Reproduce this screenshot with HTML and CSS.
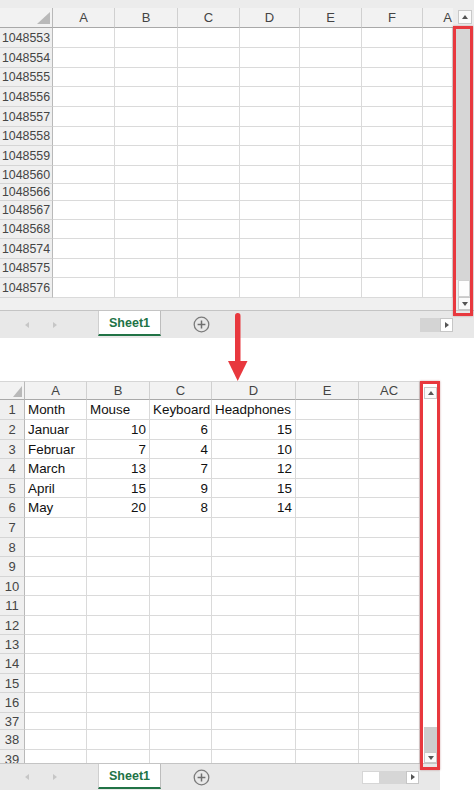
FILE: index.html
```html
<!DOCTYPE html>
<html>
<head>
<meta charset="utf-8">
<title>Excel scrollbar</title>
<link rel="stylesheet" href="styles.css">
</head>
<body>
<div class="page">

  <section class="xl xl-top">
    <div class="strip"></div>
    <div class="body">
      <div class="left">
        <div class="sheet s1">
          <div class="row hdr h20">
            <span class="corner"><svg width="13" height="12" viewBox="0 0 13 12"><polygon points="13,0 13,12 0,12" fill="#b9b9b9"/></svg></span>
            <span>A</span><span>B</span><span>C</span><span>D</span><span>E</span><span>F</span><span class="cut">A</span>
          </div>
          <div class="row h20"><span class="rh">1048553</span><span></span><span></span><span></span><span></span><span></span><span></span><span></span></div>
          <div class="row h20"><span class="rh">1048554</span><span></span><span></span><span></span><span></span><span></span><span></span><span></span></div>
          <div class="row h19"><span class="rh">1048555</span><span></span><span></span><span></span><span></span><span></span><span></span><span></span></div>
          <div class="row h20"><span class="rh">1048556</span><span></span><span></span><span></span><span></span><span></span><span></span><span></span></div>
          <div class="row h20"><span class="rh">1048557</span><span></span><span></span><span></span><span></span><span></span><span></span><span></span></div>
          <div class="row h19"><span class="rh">1048558</span><span></span><span></span><span></span><span></span><span></span><span></span><span></span></div>
          <div class="row h20"><span class="rh">1048559</span><span></span><span></span><span></span><span></span><span></span><span></span><span></span></div>
          <div class="row h18"><span class="rh">1048560</span><span></span><span></span><span></span><span></span><span></span><span></span><span></span></div>
          <div class="row h17"><span class="rh">1048566</span><span></span><span></span><span></span><span></span><span></span><span></span><span></span></div>
          <div class="row h19"><span class="rh">1048567</span><span></span><span></span><span></span><span></span><span></span><span></span><span></span></div>
          <div class="row h19"><span class="rh">1048568</span><span></span><span></span><span></span><span></span><span></span><span></span><span></span></div>
          <div class="row h20"><span class="rh">1048574</span><span></span><span></span><span></span><span></span><span></span><span></span><span></span></div>
          <div class="row h19"><span class="rh">1048575</span><span></span><span></span><span></span><span></span><span></span><span></span><span></span></div>
          <div class="row h20"><span class="rh">1048576</span><span></span><span></span><span></span><span></span><span></span><span></span><span></span></div>
        </div>
        <div class="band"></div>
      </div>
      <div class="vscroll v1">
        <div class="vtop"><div class="btn"><i class="tri-up"></i></div></div>
        <div class="track"></div>
        <div class="thumb"></div>
        <div class="btn down"><i class="tri-down"></i></div>
      </div>
    </div>
    <div class="tabbar">
      <div class="navs"><i class="tri-left"></i><i class="tri-right light"></i></div>
      <div class="tab">Sheet1</div>
      <div class="plus"><svg width="17" height="17" viewBox="0 0 17 17"><circle cx="8.5" cy="8.5" r="7.3" fill="none" stroke="#7b7b7b" stroke-width="1.3"/><path d="M8.5 4.6v7.8M4.6 8.5h7.8" stroke="#6f6f6f" stroke-width="1.5"/></svg></div>
      <div class="spacer"></div>
      <div class="hs-thumb gray"></div>
      <div class="hs-btn"><i class="tri-right dark"></i></div>
      <div class="hs-pad p21"></div>
    </div>
    <div class="redbox rb1"></div>
  </section>

  <svg class="arrow" width="24" height="70" viewBox="0 0 24 70">
    <rect x="9" y="1" width="5.5" height="50" rx="2.7" fill="#e8383e"/>
    <polygon points="2,49 21.5,49 11.7,69" fill="#e8383e"/>
  </svg>

  <section class="xl xl-bottom">
    <div class="body">
      <div class="sheet s2">
        <div class="row hdr h19">
          <span class="corner"><svg width="9" height="11" viewBox="0 0 9 11"><polygon points="9,0 9,11 0,11" fill="#b9b9b9"/></svg></span>
          <span>A</span><span>B</span><span>C</span><span>D</span><span>E</span><span>AC</span>
        </div>
        <div class="row h20"><span class="rh">1</span><span>Month</span><span>Mouse</span><span>Keyboard</span><span>Headphones</span><span></span><span></span></div>
        <div class="row h20"><span class="rh">2</span><span>Januar</span><span class="n">10</span><span class="n">6</span><span class="n">15</span><span></span><span></span></div>
        <div class="row h19"><span class="rh">3</span><span>Februar</span><span class="n">7</span><span class="n">4</span><span class="n">10</span><span></span><span></span></div>
        <div class="row h20"><span class="rh">4</span><span>March</span><span class="n">13</span><span class="n">7</span><span class="n">12</span><span></span><span></span></div>
        <div class="row h19"><span class="rh">5</span><span>April</span><span class="n">15</span><span class="n">9</span><span class="n">15</span><span></span><span></span></div>
        <div class="row h20"><span class="rh">6</span><span>May</span><span class="n">20</span><span class="n">8</span><span class="n">14</span><span></span><span></span></div>
        <div class="row h20"><span class="rh">7</span><span></span><span></span><span></span><span></span><span></span><span></span></div>
        <div class="row h19"><span class="rh">8</span><span></span><span></span><span></span><span></span><span></span><span></span></div>
        <div class="row h20"><span class="rh">9</span><span></span><span></span><span></span><span></span><span></span><span></span></div>
        <div class="row h19"><span class="rh">10</span><span></span><span></span><span></span><span></span><span></span><span></span></div>
        <div class="row h20"><span class="rh">11</span><span></span><span></span><span></span><span></span><span></span><span></span></div>
        <div class="row h19"><span class="rh">12</span><span></span><span></span><span></span><span></span><span></span><span></span></div>
        <div class="row h19"><span class="rh">13</span><span></span><span></span><span></span><span></span><span></span><span></span></div>
        <div class="row h20"><span class="rh">14</span><span></span><span></span><span></span><span></span><span></span><span></span></div>
        <div class="row h19"><span class="rh">15</span><span></span><span></span><span></span><span></span><span></span><span></span></div>
        <div class="row h20"><span class="rh">16</span><span></span><span></span><span></span><span></span><span></span><span></span></div>
        <div class="row h17"><span class="rh">37</span><span></span><span></span><span></span><span></span><span></span><span></span></div>
        <div class="row h20"><span class="rh">38</span><span></span><span></span><span></span><span></span><span></span><span></span></div>
        <div class="row h20"><span class="rh">39</span><span></span><span></span><span></span><span></span><span></span><span></span></div>
      </div>
      <div class="vscroll v2">
        <div class="vtop"><div class="btn"><i class="tri-up"></i></div></div>
        <div class="track"></div>
        <div class="thumb"></div>
        <div class="btn down"><i class="tri-down"></i></div>
      </div>
    </div>
    <div class="tabbar">
      <div class="navs"><i class="tri-left"></i><i class="tri-right light"></i></div>
      <div class="tab">Sheet1</div>
      <div class="plus"><svg width="17" height="17" viewBox="0 0 17 17"><circle cx="8.5" cy="8.5" r="7.3" fill="none" stroke="#7b7b7b" stroke-width="1.3"/><path d="M8.5 4.6v7.8M4.6 8.5h7.8" stroke="#6f6f6f" stroke-width="1.5"/></svg></div>
      <div class="spacer"></div>
      <div class="hs-thumb white"></div>
      <div class="hs-track"></div>
      <div class="hs-btn"><i class="tri-right dark"></i></div>
      <div class="hs-pad p21"></div>
    </div>
    <div class="redbox rb2"></div>
  </section>

</div>
</body>
</html>
```

FILE: styles.css
```css
html, body {
  margin: 0;
  padding: 0;
  background: #ffffff;
}

body {
  font-family: "Liberation Sans", Arial, sans-serif;
  color: #000;
}

.page {
  position: relative;
  width: 474px;
  height: 790px;
  overflow: hidden;
}

.xl {
  position: relative;
  display: flex;
  flex-direction: column;
}

.xl-top {
  width: 474px;
  height: 338px;
}

.xl-bottom {
  width: 440px;
  height: 409px;
  margin-top: 43px;
}

.strip {
  height: 8px;
  background: #ececec;
}

.body {
  display: flex;
}

.left {
  width: 453px;
  display: flex;
  flex-direction: column;
}

.sheet {
  overflow: hidden;
  background: #ffffff;
}

.s1 {
  width: 453px;
  height: 290px;
}

.s2 {
  width: 420px;
  height: 382px;
}

.band {
  height: 12px;
  background: #f0f0f0;
}

/* grid rows */
.row {
  display: grid;
}

.s1 .row {
  grid-template-columns: 53px 62px 63px 62px 60px 62px 61px 30px;
}

.s2 .row {
  grid-template-columns: 25px 62px 63px 62px 84px 63px 61px;
}

.h20 { height: 20px; }
.h19 { height: 19px; }
.h18 { height: 18px; }
.h17 { height: 17px; }

.row > span {
  box-sizing: border-box;
  display: flex;
  align-items: center;
  padding: 0 3px;
  border-right: 1px solid #dadada;
  border-bottom: 1px solid #dadada;
  white-space: nowrap;
  overflow: visible;
  font-size: 13.4px;
  color: #111;
}

.row > .n {
  justify-content: flex-end;
}

.row > .rh {
  background: #efefef;
  border-right-color: #b9b9b9;
  border-bottom-color: #d5d5d5;
  justify-content: center;
  padding: 0;
  color: #454545;
}

.s1 .row > .rh {
  font-size: 12.4px;
}

.s2 .row > .rh {
  font-size: 13px;
}

.hdr > span {
  background: #f2f2f2;
  border-right-color: #d0d0d0;
  border-bottom-color: #a9a9a9;
  justify-content: center;
  color: #444;
  font-size: 13px;
}

.s2 .hdr > span {
  border-top: 1px solid #d6d6d6;
}

.hdr > .corner {
  justify-content: flex-end;
  align-items: flex-end;
  padding: 0 2px 3px 0;
  border-right-color: #b9b9b9;
}

.s2 .hdr > .corner {
  padding: 0 2px 2px 0;
}

.hdr > .cut {
  justify-content: flex-end;
  padding: 0 1px 0 0;
  border-right: none;
}

/* vertical scrollbars */
.vscroll {
  display: flex;
  flex-direction: column;
}

.v1 {
  width: 21px;
  height: 302px;
  background: #ececec;
}

.v2 {
  width: 20px;
  height: 382px;
  background: #ffffff;
}

.vtop {
  display: flex;
}

.v1 .vtop {
  height: 20px;
  padding: 2px 0 0 5px;
  box-sizing: border-box;
}

.v2 .vtop {
  height: 20px;
  padding: 6px 0 0 4px;
  box-sizing: border-box;
}

.btn {
  box-sizing: border-box;
  background: #fbfbfb;
  border: 1px solid #c9c9c9;
  display: flex;
  align-items: center;
  justify-content: center;
}

.v1 .vtop .btn {
  width: 14px;
  height: 14px;
}

.v2 .vtop .btn {
  width: 13px;
  height: 12px;
}

.v1 .track {
  height: 252px;
  margin-left: 3px;
  width: 15px;
  background: #d6d6d6;
}

.v2 .track {
  height: 326px;
}

.v1 .thumb {
  height: 17px;
  width: 12px;
  margin-left: 5px;
  background: #fdfdfd;
  border: 1px solid #d0d0d0;
  box-sizing: border-box;
}

.v2 .thumb {
  height: 25px;
  width: 13px;
  margin-left: 4px;
  background: #cdcdcd;
}

.v1 .down {
  height: 13px;
  width: 14px;
  margin-left: 5px;
}

.v2 .down {
  height: 11px;
  width: 13px;
  margin-left: 4px;
}

/* tiny triangles */
.tri-up, .tri-down, .tri-left, .tri-right {
  display: block;
  width: 0;
  height: 0;
}

.tri-up {
  border-left: 3.5px solid transparent;
  border-right: 3.5px solid transparent;
  border-bottom: 4px solid #555;
}

.tri-down {
  border-left: 3.5px solid transparent;
  border-right: 3.5px solid transparent;
  border-top: 4px solid #555;
}

.tri-left {
  border-top: 3.5px solid transparent;
  border-bottom: 3.5px solid transparent;
  border-right: 4px solid #c6c6c6;
}

.tri-right {
  border-top: 3.5px solid transparent;
  border-bottom: 3.5px solid transparent;
  border-left: 4px solid #c6c6c6;
}

.tri-right.dark {
  border-left-color: #555;
}

/* sheet tab bar */
.tabbar {
  display: flex;
  align-items: center;
  height: 27px;
  background: #e8e8e8;
  border-top: 1px solid #c4c4c4;
}

.xl-bottom .tabbar {
  height: 26px;
}

.navs {
  display: flex;
  align-items: center;
  gap: 24px;
  width: 98px;
  padding-left: 25px;
  box-sizing: border-box;
}

.tab {
  align-self: flex-start;
  box-sizing: border-box;
  width: 63px;
  height: 25px;
  background: #ffffff;
  border-left: 1px solid #cfcfcf;
  border-right: 1px solid #bdbdbd;
  border-bottom: 2px solid #217346;
  color: #217346;
  font-weight: bold;
  font-size: 12.5px;
  display: flex;
  align-items: center;
  justify-content: center;
  padding-top: 1px;
}

.plus {
  margin-left: 32px;
  width: 17px;
  height: 17px;
}

.plus svg {
  display: block;
}

.spacer {
  flex: 1;
}

.hs-thumb {
  height: 14px;
  box-sizing: border-box;
}

.hs-thumb.gray {
  width: 20px;
  background: #d4d4d4;
}

.hs-thumb.white {
  width: 18px;
  height: 13px;
  background: #ffffff;
  border: 1px solid #d6d6d6;
}

.hs-track {
  width: 26px;
  height: 13px;
  background: #d6d6d6;
}

.hs-btn {
  box-sizing: border-box;
  width: 13px;
  height: 14px;
  background: #ffffff;
  border: 1px solid #c6c6c6;
  display: flex;
  align-items: center;
  justify-content: center;
}

.xl-bottom .hs-btn {
  height: 13px;
}

.hs-pad.p21 {
  width: 21px;
}

/* red highlight overlays */
.redbox {
  position: absolute;
  box-sizing: border-box;
  border: 3px solid #e8383e;
  box-shadow: 0 0 2px rgba(120, 0, 0, 0.35);
}

.rb1 {
  left: 453px;
  top: 26px;
  width: 20px;
  height: 290px;
}

.rb2 {
  left: 420px;
  top: 0;
  width: 20px;
  height: 389px;
}

.arrow {
  position: absolute;
  left: 226px;
  top: 312px;
  z-index: 2;
}
```
